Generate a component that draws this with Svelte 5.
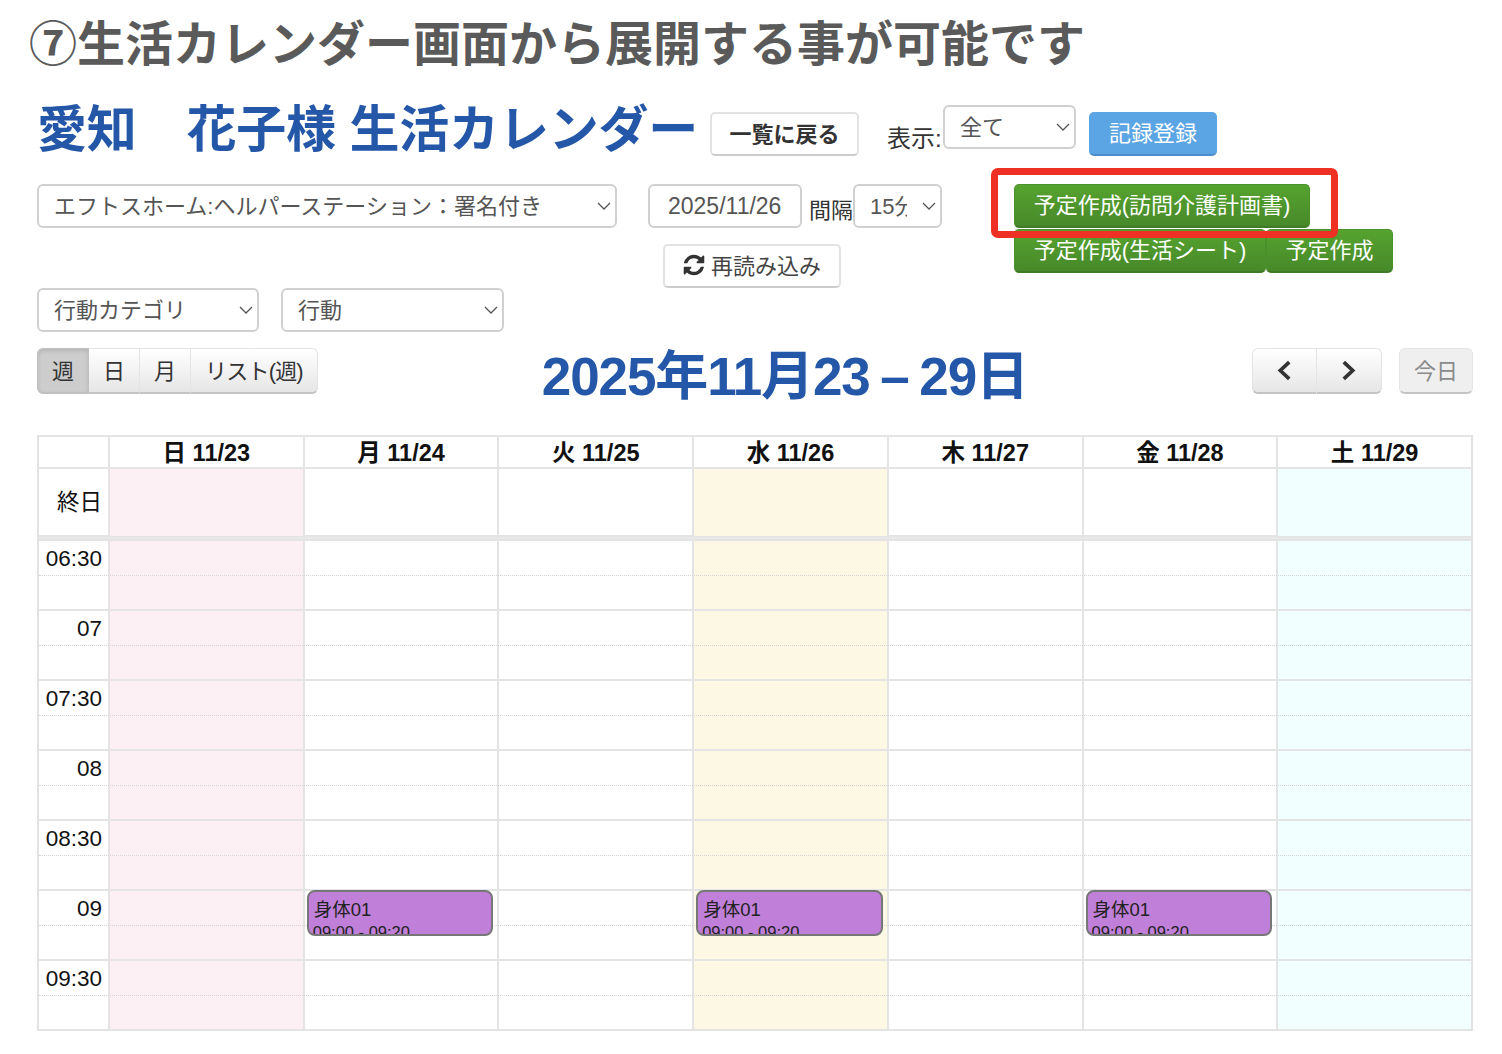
<script>
  const days = [
    { label: "日 11/23", tone: "sun" },
    { label: "月 11/24", tone: "" },
    { label: "火 11/25", tone: "" },
    { label: "水 11/26", tone: "today" },
    { label: "木 11/27", tone: "" },
    { label: "金 11/28", tone: "" },
    { label: "土 11/29", tone: "sat" }
  ];
  const slots = ["06:30", "07", "07:30", "08", "08:30", "09", "09:30"];
  const eventDays = [1, 3, 5];
  const views = ["週", "日", "月", "リスト(週)"];
</script>

<main>
  <p class="caption">⑦生活カレンダー画面から展開する事が可能です</p>

  <div class="title-row">
    <h1>愛知　花子様 生活カレンダー</h1>
    <button class="btn back">一覧に戻る</button>
    <span class="show-label">表示:</span>
    <label class="sel show-sel">
      <select><option>全て</option></select>
      <svg viewBox="0 0 14 8"><path d="M1 1l6 6 6-6" /></svg>
    </label>
    <button class="btn blue">記録登録</button>
  </div>

  <div class="filter-row">
    <label class="sel office-sel">
      <select><option>エフトスホーム:ヘルパーステーション：署名付き</option></select>
      <svg viewBox="0 0 14 8"><path d="M1 1l6 6 6-6" /></svg>
    </label>
    <div class="mid">
      <div class="date-line">
        <input class="date" value="2025/11/26" />
        <span class="gap-label">間隔</span>
        <label class="sel gap-sel">
          <select><option>15分</option></select>
          <svg viewBox="0 0 14 8"><path d="M1 1l6 6 6-6" /></svg>
        </label>
      </div>
      <button class="btn reload">
        <svg viewBox="0 0 1536 1792"><path d="M1511 1056q0 5-1 7-64 268-268 434.500t-478 166.500q-146 0-282.500-55t-243.500-157l-129 129q-19 19-45 19t-45-19-19-45v-448q0-26 19-45t45-19h448q26 0 45 19t19 45-19 45l-137 137q71 66 161 102t187 36q134 0 250-65t186-179q11-17 53-117 8-23 30-23h192q13 0 22.500 9.500t9.500 22.500zm25-800v448q0 26-19 45t-45 19h-448q-26 0-45-19t-19-45 19-45l138-138q-148-137-349-137-134 0-250 65t-186 179q-11 17-53 117-8 23-30 23h-199q-13 0-22.500-9.500t-9.500-22.500v-7q65-268 270-434.500t480-166.500q146 0 284 55.500t245 156.500l130-129q19-19 45-19t45 19 19 45z" /></svg>
        再読み込み
      </button>
    </div>
    <div class="plans">
      <button class="btn green plan-main">予定作成(訪問介護計画書)</button>
      <div class="plan-line">
        <button class="btn green plan-sheet">予定作成(生活シート)</button>
        <button class="btn green plan-plain">予定作成</button>
      </div>
      <div class="highlight"></div>
    </div>
  </div>

  <div class="category-row">
    <label class="sel cat-sel">
      <select><option>行動カテゴリ</option></select>
      <svg viewBox="0 0 14 8"><path d="M1 1l6 6 6-6" /></svg>
    </label>
    <label class="sel cat-sel act">
      <select><option>行動</option></select>
      <svg viewBox="0 0 14 8"><path d="M1 1l6 6 6-6" /></svg>
    </label>
  </div>

  <div class="cal-toolbar">
    <div class="group">
      {#each views as view, i}
        <button class="fc" class:active={i === 0}>{view}</button>
      {/each}
    </div>
    <h2>2025年11月23 – 29日</h2>
    <div class="right">
      <div class="group">
        <button class="fc arrow" aria-label="前">
          <svg viewBox="0 0 14 20"><path d="M11.500 2L3 10l8.500 8" /></svg>
        </button>
        <button class="fc arrow" aria-label="次">
          <svg viewBox="0 0 14 20"><path d="M2.500 2L11 10l-8.500 8" /></svg>
        </button>
      </div>
      <button class="fc today-btn">今日</button>
    </div>
  </div>

  <div class="calendar">
    <div class="row head">
      <div class="cell axis"></div>
      {#each days as day}
        <div class="cell">{day.label}</div>
      {/each}
    </div>
    <div class="row allday">
      <div class="cell axis">終日</div>
      {#each days as day}
        <div class="cell {day.tone}"></div>
      {/each}
    </div>
    <div class="divider"></div>
    {#each slots as slot}
      <div class="row slot">
        <div class="cell axis">{slot}</div>
        {#each days as day, d}
          <div class="cell {day.tone}">
            {#if slot === "09" && eventDays.includes(d)}
              <div class="event">
                <div class="event-name">身体01</div>
                <div class="event-time">09:00 - 09:20</div>
              </div>
            {/if}
          </div>
        {/each}
      </div>
    {/each}
    <div class="end"></div>
  </div>
</main>

<style>
  :global(body) {
    background: #fff;
  }

  main {
    font-family: "Liberation Sans", "Noto Sans CJK JP", sans-serif;
    padding: 0 29px 24px 37px;
    color: #333;
  }

  .caption {
    margin: 0 0 0 -8px;
    height: 97px;
    line-height: 90px;
    font-size: 48px;
    font-weight: 700;
    color: #5a5a5a;
    white-space: nowrap;
  }

  .title-row {
    display: flex;
    align-items: flex-start;
    height: 87px;
  }

  h1 {
    margin: 3px 15px 0 0;
    width: 658px;
    font-size: 50px;
    line-height: 60px;
    font-weight: 700;
    color: #2457a8;
    white-space: nowrap;
    letter-spacing: -0.2px;
  }

  .btn {
    font: inherit;
    font-size: 22px;
    height: 44px;
    padding: 0 0 5px;
    border-radius: 5px;
    cursor: pointer;
    white-space: nowrap;
    background: #fff;
    color: #333;
    border: 2px solid #e2e2e2;
    border-bottom-color: #ccc;
  }

  .back {
    margin-top: 15px;
    width: 149px;
    font-weight: 700;
  }

  .show-label {
    margin: 24px 0 0 28px;
    font-size: 24px;
    line-height: 36px;
    color: #333;
    width: 56px;
    white-space: nowrap;
  }

  .blue {
    margin: 15px 0 0 13px;
    width: 128px;
    color: #fff;
    background: #5ba5e4;
    border: 1px solid #5ba5e4;
    border-bottom: 2px solid #4a8fcb;
  }

  .sel {
    position: relative;
    display: block;
    height: 44px;
  }

  .sel select {
    appearance: none;
    width: 100%;
    height: 100%;
    font: inherit;
    font-size: 22px;
    color: #555;
    background: #fff;
    border: 2px solid #d0d0d0;
    border-radius: 6px;
    padding: 0 33px 0 15px;
  }

  .sel svg {
    position: absolute;
    right: 6px;
    top: 18px;
    width: 14px;
    height: 8px;
    fill: none;
    stroke: #555;
    stroke-width: 1.300;
    pointer-events: none;
  }

  .show-sel {
    margin-top: 8px;
    width: 133px;
  }

  .filter-row {
    display: flex;
    align-items: flex-start;
    height: 104px;
  }

  .office-sel {
    width: 580px;
  }

  .mid {
    margin-left: 31px;
    width: 294px;
  }

  .date-line {
    display: flex;
    height: 44px;
  }

  .date {
    box-sizing: border-box;
    width: 154px;
    height: 44px;
    font: inherit;
    font-size: 23px;
    color: #555;
    background: #fff;
    border: 2px solid #d0d0d0;
    border-radius: 6px;
    padding: 0 0 0 18px;
  }

  .gap-label {
    width: 51px;
    margin-left: 7px;
    margin-right: -7px;
    font-size: 22px;
    line-height: 54px;
    color: #333;
    white-space: nowrap;
  }

  .gap-sel {
    width: 89px;
  }

  .reload {
    display: flex;
    align-items: center;
    justify-content: center;
    gap: 6px;
    width: 178px;
    margin: 16px 0 0 15px;
    color: #444;
  }

  .reload svg {
    width: 22px;
    height: 24px;
    fill: #333;
    margin-top: 3px;
  }

  .plans {
    position: relative;
    margin-left: 72px;
  }

  .green {
    color: #fff;
    background: linear-gradient(#56a32f, #47892a);
    border: 1px solid #4a912b;
    border-bottom: 2px solid #3f7a26;
  }

  .plan-main {
    display: block;
    width: 296px;
    margin-bottom: 1px;
  }

  .plan-line {
    display: flex;
  }

  .plan-sheet {
    width: 252px;
  }

  .plan-plain {
    width: 127px;
  }

  .highlight {
    position: absolute;
    left: -23px;
    top: -16px;
    width: 347px;
    height: 70px;
    box-sizing: border-box;
    border: 7px solid #ee3124;
    border-radius: 7px;
    pointer-events: none;
  }

  .category-row {
    display: flex;
    gap: 22px;
    height: 60px;
  }

  .cat-sel {
    width: 222px;
  }

  .act {
    width: 223px;
  }

  .cal-toolbar {
    display: flex;
    justify-content: space-between;
    align-items: flex-start;
    height: 87px;
  }

  h2 {
    margin: 0;
    font-size: 53px;
    line-height: 58px;
    font-weight: 700;
    color: #2457a8;
    letter-spacing: -1.1px;
    word-spacing: -3px;
    white-space: nowrap;
  }

  .group {
    display: flex;
  }

  .right {
    display: flex;
    gap: 17px;
  }

  .fc {
    font: inherit;
    font-size: 22px;
    height: 46px;
    padding: 0 14px 4px;
    color: #333;
    background: linear-gradient(#fff, #e6e6e6);
    border: 1px solid #e4e4e4;
    border-bottom: 2px solid #c4c4c4;
    border-left-width: 0;
    white-space: nowrap;
  }

  .group .fc:first-child {
    border-left-width: 1px;
    border-radius: 6px 0 0 6px;
  }

  .group .fc:last-child {
    border-radius: 0 6px 6px 0;
  }

  .group .fc:nth-child(4) {
    letter-spacing: -0.8px;
  }

  .fc.active {
    background: #cdcdcd;
    border-color: #c0c0c0;
    box-shadow: inset 0 2px 4px rgba(0, 0, 0, 0.12);
  }

  .arrow {
    width: 65px;
    padding: 0;
    display: flex;
    align-items: center;
    justify-content: center;
  }

  .arrow svg {
    width: 15px;
    height: 21px;
    fill: none;
    stroke: #333;
    stroke-width: 3.500;
  }

  .today-btn {
    width: 74px;
    padding: 0 0 4px;
    color: #8a8a8a;
    background: #efefef;
    border-left-width: 1px;
    border-radius: 6px;
  }

  .calendar {
    border-left: 2px solid #e2e2e2;
    border-right: 2px solid #e2e2e2;
    color: #111;
  }

  .row {
    display: grid;
    grid-template-columns: 69px repeat(7, 1fr);
    border-top: 2px solid #e4e4e4;
  }

  .cell {
    position: relative;
    border-left: 2px solid #e4e4e4;
  }

  .cell.axis {
    border-left: none;
    text-align: right;
    padding-right: 6px;
    font-size: 22.500px;
  }

  .head {
    height: 30px;
  }

  .head .cell {
    text-align: center;
    font-weight: 700;
    font-size: 23.500px;
    line-height: 32px;
  }

  .allday {
    height: 66px;
  }

  .allday .axis {
    line-height: 67px;
  }

  .divider {
    height: 2px;
    background: #e8e8e8;
    border-top: 2px solid #e4e4e4;
  }

  .slot {
    position: relative;
    height: 68px;
  }

  .slot .axis {
    line-height: 36px;
  }

  .slot::after {
    content: "";
    position: absolute;
    left: 0;
    right: 0;
    top: 34px;
    border-top: 1px dotted #d4d4d4;
  }

  .sun {
    background: #fcf0f4;
  }

  .today {
    background: #fcf8e3;
  }

  .sat {
    background: #f2ffff;
  }

  .end {
    height: 0;
    border-top: 2px solid #e4e4e4;
  }

  .event {
    position: absolute;
    z-index: 1;
    left: 2px;
    right: 4px;
    top: -1px;
    height: 46px;
    box-sizing: border-box;
    padding: 5px 4px 0;
    overflow: hidden;
    background: #c07fd8;
    border: 2px solid #777;
    border-radius: 8px;
    color: #222;
    white-space: nowrap;
  }

  .event-name {
    margin-left: 1px;
    font-size: 18.500px;
    line-height: 26px;
  }

  .event-time {
    font-size: 16.500px;
    line-height: 19px;
  }
</style>
